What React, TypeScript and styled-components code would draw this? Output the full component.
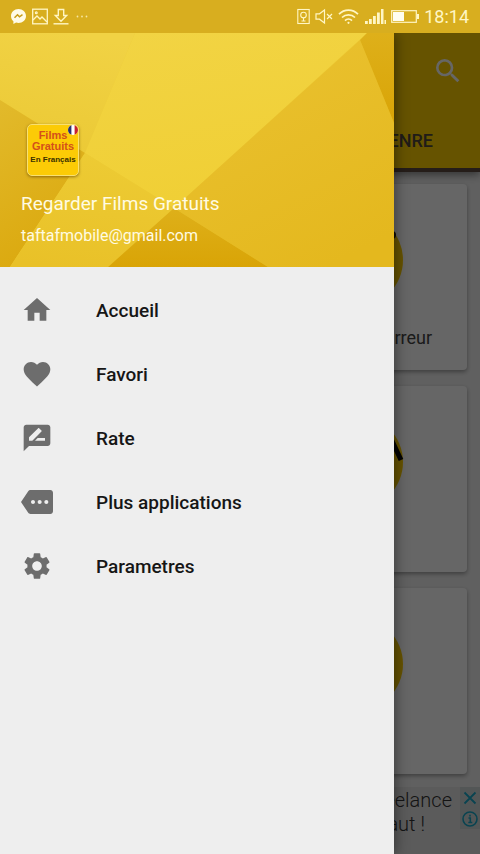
import React from 'react';
import styled, { createGlobalStyle } from 'styled-components';
import type { IconType } from 'react-icons';
import {
  MdFavorite,
  MdHome,
  MdMore,
  MdRateReview,
  MdSearch,
  MdSettings,
} from 'react-icons/md';

const GlobalStyle = createGlobalStyle`
  *, *::before, *::after { box-sizing: border-box; }
  body {
    margin: 0;
    font-family: Roboto, "Liberation Sans", sans-serif;
    background: #616161;
  }
  button, a { font: inherit; color: inherit; }
  button { border: 0; padding: 0; background: none; cursor: pointer; }
  h1, h2, p { margin: 0; font-weight: 400; }
`;

const Screen = styled.div`
  display: flex;
  flex-direction: column;
  min-height: 100vh;
`;

/* ---------- status bar ---------- */

const StatusBar = styled.header`
  display: flex;
  align-items: center;
  justify-content: space-between;
  height: 33px;
  padding: 0 11px 0 10px;
  background: #d8ae1f;
  color: #fff6c4;
`;

const StatusGroup = styled.div`
  display: flex;
  align-items: center;
  gap: 5px;

  svg { display: block; }
`;

const Clock = styled.time`
  font-size: 18px;
  line-height: 20px;
`;

/* ---------- page under the drawer ---------- */

const Stage = styled.div`
  position: relative;
  display: flex;
  flex: 1;
  flex-direction: column;
  overflow: hidden;
`;

const Page = styled.div`
  display: flex;
  flex: 1;
  flex-direction: column;
  background: #f0f0f0;
`;

const AppBar = styled.div`
  z-index: 1;
  background: #ffd000;
  border-bottom: 4px solid #5c4a40;
  box-shadow: 0 3px 8px rgba(0, 0, 0, 0.45);
`;

const Toolbar = styled.div`
  display: flex;
  align-items: center;
  justify-content: flex-end;
  height: 76px;
  padding-right: 16px;
  color: #ffffff;
`;

const SearchButton = styled.button`
  display: flex;
  font-size: 32px;
`;

const Tabs = styled.div`
  display: flex;
  align-items: center;
  justify-content: flex-end;
  height: 59px;
  padding: 4px 47px 0 0;
`;

const Tab = styled.button`
  font-size: 18px;
  font-weight: 500;
  line-height: 24px;
  color: #50463c;
`;

const Cards = styled.main`
  display: flex;
  flex: 1;
  flex-direction: column;
  gap: 16px;
  padding: 12px 13px 13px;
`;

const Card = styled.article`
  display: flex;
  flex-direction: column;
  align-items: flex-end;
  gap: 18px;
  height: 186px;
  padding: 28px 35px 0 0;
  border-radius: 4px;
  background: #ffffff;
  box-shadow: 0 2px 4px rgba(0, 0, 0, 0.35);
`;

const Badge = styled.svg`
  flex: none;
  display: block;
  margin-right: 28px;
`;

const CardTitle = styled.h2`
  font-size: 18px;
  line-height: 24px;
  color: #444444;
`;

const Ad = styled.aside`
  display: flex;
  justify-content: flex-end;
  align-items: flex-start;
  gap: 8px;
  height: 67px;
  background: #e4e4e4;
`;

const AdText = styled.p`
  padding-top: 1px;
  font-size: 20px;
  font-weight: 300;
  line-height: 24px;
  color: #333333;

  span { display: block; }
`;

const AdControls = styled.div`
  display: flex;
  flex-direction: column;
  width: 20px;
  color: #18a8c8;
  background: #cfd8d8;
`;

const AdButton = styled.button`
  display: flex;
  align-items: center;
  justify-content: center;
  height: 21px;
`;

const Scrim = styled.div`
  position: absolute;
  inset: 0;
  z-index: 2;
  background: rgba(0, 0, 0, 0.6);
`;

/* ---------- drawer ---------- */

const Drawer = styled.aside`
  position: absolute;
  top: 0;
  bottom: 0;
  left: 0;
  z-index: 3;
  width: calc(100% - 86px);
  background: #eeeeee;
  box-shadow: 2px 0 12px rgba(0, 0, 0, 0.4);
`;

const Profile = styled.div`
  position: relative;
  z-index: 0;
  display: flex;
  flex-direction: column;
  align-items: flex-start;
  height: 234px;
  padding: 91px 21px 0;
  color: #fffbe2;
`;

const Backdrop = styled.svg`
  position: absolute;
  inset: 0;
  z-index: -1;
  width: 100%;
  height: 100%;
`;

const Logo = styled.div`
  position: relative;
  width: 52px;
  height: 52px;
  margin: 0 0 14px 6px;
  padding-top: 5px;
  border: 1px solid #f8e070;
  border-radius: 5px;
  background: #fccb06;
  box-shadow: 0 1px 3px rgba(90, 60, 0, 0.6);
  font-family: "Liberation Sans", Arial, sans-serif;
  font-weight: 700;
  text-align: center;
  white-space: nowrap;
`;

const LogoTitle = styled.div`
  font-size: 11px;
  line-height: 11px;
  color: #d4501a;
`;

const LogoSub = styled.div`
  margin-top: 3px;
  font-size: 8px;
  line-height: 10px;
  color: #3a3000;
`;

const Flag = styled.svg`
  position: absolute;
  top: 0;
  right: 0;
`;

const ProfileName = styled.h1`
  font-size: 19px;
  line-height: 28px;
`;

const ProfileMail = styled.p`
  margin-top: 4px;
  font-size: 16px;
  line-height: 28px;
`;

const Menu = styled.nav`
  display: flex;
  flex-direction: column;
  padding-top: 11px;
`;

const MenuItem = styled.a`
  display: flex;
  align-items: center;
  gap: 43px;
  height: 64px;
  padding: 0 21px;
  font-size: 19px;
  font-weight: 500;
  color: #161616;
  text-decoration: none;

  svg {
    flex: none;
    font-size: 32px;
    color: #6d6d6d;
  }
`;

const menu: { label: string; icon: IconType }[] = [
  { label: 'Accueil', icon: MdHome },
  { label: 'Favori', icon: MdFavorite },
  { label: 'Rate', icon: MdRateReview },
  { label: 'Plus applications', icon: MdMore },
  { label: 'Parametres', icon: MdSettings },
];

function StatusIcons() {
  return (
    <StatusGroup>
      <svg width="17" height="17" viewBox="0 0 17 17">
        <path
          d="M8.500 1C4.300 1 1 4.100 1 8c0 2.100.9 3.900 2.400 5.200V16l2.700-1.400c.8.200 1.600.4 2.400.4 4.200 0 7.500-3.100 7.500-7S12.700 1 8.500 1z"
          fill="#fffbe6"
        />
        <path d="M4.500 9.800l3-3 2 2 3-2.200" fill="none" stroke="#c89c18" strokeWidth="1.500" />
      </svg>
      <svg width="16" height="17" viewBox="0 0 16 17" fill="none" stroke="currentColor" strokeWidth="1.300">
        <rect x="0.700" y="1.200" width="14.600" height="14.600" />
        <path d="M1 12l4-4 3 3 2-2 5 5" />
        <circle cx="4.300" cy="4.800" r="0.900" />
      </svg>
      <svg width="16" height="17" viewBox="0 0 16 17" fill="none" stroke="currentColor" strokeWidth="1.400">
        <path d="M5.300 1.500h5.400v6h3L8 13.300 2.300 7.500h3z" />
        <path d="M0.500 15.800h15" />
      </svg>
      <svg width="17" height="17" viewBox="0 0 17 17" fill="currentColor" opacity="0.8">
        <circle cx="3.500" cy="8.500" r="0.900" />
        <circle cx="8" cy="8.500" r="0.900" />
        <circle cx="12.500" cy="8.500" r="0.900" />
      </svg>
    </StatusGroup>
  );
}

function SystemIcons() {
  return (
    <StatusGroup>
      <svg width="13" height="17" viewBox="0 0 13 17" fill="none" stroke="currentColor" strokeWidth="1.100">
        <rect x="0.800" y="1.500" width="11.400" height="14" />
        <circle cx="6.500" cy="7" r="2.800" />
        <path d="M6.500 9.800v3M4.500 13h4" />
      </svg>
      <svg width="18" height="17" viewBox="0 0 18 17" fill="none" stroke="currentColor" strokeWidth="1.200">
        <path d="M1 5.800h3.500L9.500 2v13l-5-3.800H1z" />
        <path d="M12 6l5 5M17 6l-5 5" />
      </svg>
      <svg width="21" height="17" viewBox="0 0 21 17" fill="none" stroke="currentColor" strokeWidth="1.700">
        <path d="M1 6.200C6.200.8 14.800.8 20 6.200M4 9.500c3.600-3.600 9.400-3.600 13 0M7 12.600c2-1.900 5-1.900 7 0" />
        <circle cx="10.500" cy="14.800" r="1.100" fill="currentColor" stroke="none" />
      </svg>
      <svg width="22" height="17" viewBox="0 0 22 17" fill="currentColor">
        <path d="M1 13h2.800v3H1zM5 11h2.800v5H5zM9 8h2.800v8H9zM13 4.500h2.800V16H13zM17 1h2.500v15H17zM20.500 12H22v4h-1.500z" />
      </svg>
      <svg width="28" height="17" viewBox="0 0 28 17">
        <rect x="0.700" y="2.700" width="24.600" height="11.600" fill="none" stroke="currentColor" strokeWidth="1.200" />
        <rect x="2" y="4" width="11" height="9" fill="#fffdf0" />
        <path d="M26 6h2v5h-2z" fill="currentColor" />
      </svg>
      <Clock>18:14</Clock>
    </StatusGroup>
  );
}

function FacetedBackdrop() {
  return (
    <Backdrop viewBox="0 0 394 234" preserveAspectRatio="none" aria-hidden="true">
      <defs>
        <linearGradient id="light" x1="0" y1="0" x2="0.3" y2="1">
          <stop offset="0" stopColor="#f2d444" />
          <stop offset="1" stopColor="#f0cf35" />
        </linearGradient>
        <linearGradient id="upper" x1="0.500" y1="0" x2="0.300" y2="1">
          <stop offset="0" stopColor="#f1d244" />
          <stop offset="1" stopColor="#ebc935" />
        </linearGradient>
        <linearGradient id="side" x1="0" y1="0" x2="0.300" y2="1">
          <stop offset="0" stopColor="#e2ba2b" />
          <stop offset="1" stopColor="#dba90f" />
        </linearGradient>
        <linearGradient id="middle" x1="0.500" y1="0" x2="0.300" y2="1">
          <stop offset="0" stopColor="#edcb34" />
          <stop offset="1" stopColor="#e9c128" />
        </linearGradient>
        <linearGradient id="right" x1="0.300" y1="0.200" x2="0.700" y2="1">
          <stop offset="0" stopColor="#e9c02d" />
          <stop offset="1" stopColor="#e4b81e" />
        </linearGradient>
        <linearGradient id="dark" x1="0" y1="0" x2="0" y2="1">
          <stop offset="0" stopColor="#deb01a" />
          <stop offset="1" stopColor="#d9a406" />
        </linearGradient>
      </defs>
      <rect width="394" height="234" fill="#edcb34" />
      <path d="M0 0h135L85 120 0 67z" fill="url(#upper)" />
      <path d="M135 0h232L174 175 85 120z" fill="url(#light)" />
      <path d="M0 67l85 53L10 234H0z" fill="url(#side)" />
      <path d="M85 120l89 55-66 59H10z" fill="url(#middle)" />
      <path d="M360 7l34 83v144H268l-94-59z" fill="url(#right)" />
      <path d="M174 175l94 59H108z" fill="url(#dark)" />
      <path d="M367 0h27v90L360 7z" fill="url(#dark)" />
    </Backdrop>
  );
}

function AppLogo() {
  return (
    <Logo>
      <LogoTitle>Films</LogoTitle>
      <LogoTitle>Gratuits</LogoTitle>
      <LogoSub>En Français</LogoSub>
      <Flag width="10" height="10" viewBox="0 0 10 10" aria-hidden="true">
        <clipPath id="disc"><circle cx="5" cy="5" r="5" /></clipPath>
        <g clipPath="url(#disc)">
          <rect width="10" height="10" fill="#ffffff" />
          <rect width="3.400" height="10" fill="#28306e" />
          <rect x="6.600" width="3.400" height="10" fill="#c8202c" />
        </g>
      </Flag>
    </Logo>
  );
}

type Mark = 'dot' | 'stroke' | 'none';

function CategoryBadge({ mark }: { mark: Mark }) {
  return (
    <Badge width="96" height="96" viewBox="0 0 96 96" aria-hidden="true">
      <circle cx="48" cy="48" r="47" fill="#ffd000" />
      {mark === 'dot' && <circle cx="84" cy="23" r="4" fill="#201808" />}
      {mark === 'stroke' && <path d="M77 12l16 34" stroke="#080808" strokeWidth="5" />}
    </Badge>
  );
}

export default function App() {
  return (
    <>
      <GlobalStyle />
      <Screen>
        <StatusBar>
          <StatusIcons />
          <SystemIcons />
        </StatusBar>
        <Stage>
          <Page>
            <AppBar>
              <Toolbar>
                <SearchButton aria-label="Rechercher"><MdSearch /></SearchButton>
              </Toolbar>
              <Tabs>
                <Tab>GENRE</Tab>
              </Tabs>
            </AppBar>
            <Cards>
              <Card>
                <CategoryBadge mark="dot" />
                <CardTitle>Horreur</CardTitle>
              </Card>
              <Card><CategoryBadge mark="stroke" /></Card>
              <Card><CategoryBadge mark="none" /></Card>
            </Cards>
            <Ad>
              <AdText>
                <span>Freelance</span>
                <span>il faut !</span>
              </AdText>
              <AdControls>
                <AdButton aria-label="Fermer">
                  <svg width="14" height="14" viewBox="0 0 14 14" stroke="currentColor" strokeWidth="1.800">
                    <path d="M1.500 1.500l11 11M12.500 1.500l-11 11" />
                  </svg>
                </AdButton>
                <AdButton aria-label="Informations">
                  <svg width="16" height="16" viewBox="0 0 16 16" fill="none" stroke="currentColor" strokeWidth="1.600">
                    <circle cx="8" cy="8" r="7" />
                    <path d="M6.500 7H8.300v4.500M6.300 11.500h4M8 3.800v1.600" />
                  </svg>
                </AdButton>
              </AdControls>
            </Ad>
          </Page>
          <Scrim />
          <Drawer>
            <Profile>
              <FacetedBackdrop />
              <AppLogo />
              <ProfileName>Regarder Films Gratuits</ProfileName>
              <ProfileMail>taftafmobile@gmail.com</ProfileMail>
            </Profile>
            <Menu>
              {menu.map(({ label, icon: Icon }) => (
                <MenuItem key={label} href="#">
                  <Icon aria-hidden="true" />
                  {label}
                </MenuItem>
              ))}
            </Menu>
          </Drawer>
        </Stage>
      </Screen>
    </>
  );
}
